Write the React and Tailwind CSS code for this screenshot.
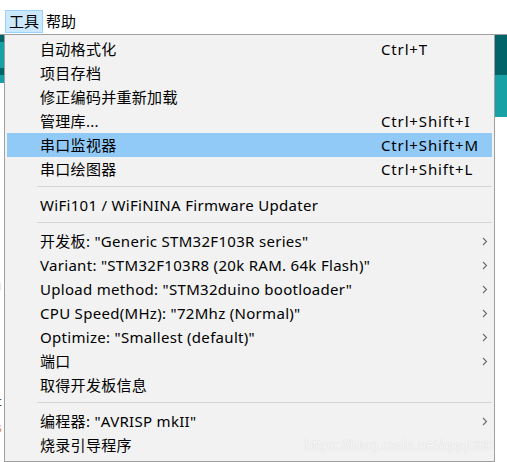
import React from "react";

const FONT = { fontFamily: '"Segoe UI", "Noto Sans", "Noto Sans CJK SC", sans-serif' };

const groups = [
  [
    { label: "自动格式化", key: "Ctrl+T" },
    { label: "项目存档" },
    { label: "修正编码并重新加载" },
    { label: "管理库...", key: "Ctrl+Shift+I" },
    { label: "串口监视器", key: "Ctrl+Shift+M", active: true },
    { label: "串口绘图器", key: "Ctrl+Shift+L" },
  ],
  [{ label: "WiFi101 / WiFiNINA Firmware Updater" }],
  [
    { label: '开发板: "Generic STM32F103R series"', sub: true },
    { label: 'Variant: "STM32F103R8 (20k RAM. 64k Flash)"', sub: true },
    { label: 'Upload method: "STM32duino bootloader"', sub: true },
    { label: 'CPU Speed(MHz): "72Mhz (Normal)"', sub: true },
    { label: 'Optimize: "Smallest (default)"', sub: true },
    { label: "端口", sub: true },
    { label: "取得开发板信息" },
  ],
  [
    { label: '编程器: "AVRISP mkII"', sub: true },
    { label: "烧录引导程序" },
  ],
];

const Chevron = () => (
  <svg width="6" height="9" viewBox="0 0 6 9" className="text-[#6b6b6b]">
    <path d="M1 1l3.5 3.5L1 8" fill="none" stroke="currentColor" strokeWidth="1.1" />
  </svg>
);

const MenuRow = ({ item }) => (
  <div
    className={`flex h-[24px] items-center pl-[33px] text-[15px] text-black ${
      item.active ? "bg-[#91c9f7]" : ""
    }`}
  >
    <span className="w-[341px] whitespace-nowrap tracking-[0.3px]">{item.label}</span>
    <span className="flex-1 whitespace-nowrap tracking-[0.85px]">{item.key}</span>
    {item.sub && (
      <span className="mr-[3px] flex w-[8px] justify-center">
        <Chevron />
      </span>
    )}
  </div>
);

const Separator = () => (
  <div className="h-[12px] pl-[30px] pt-[5px]">
    <div className="h-px bg-[#d5d5d5]" />
  </div>
);

export default function App() {
  return (
    <div className="relative h-[462px] w-[507px] overflow-hidden bg-white" style={FONT}>
      {/* menubar */}
      <div className="flex h-[35px] items-start border-b border-[#a0a0a0] pl-[5px] pt-[10px] text-[15px] text-black">
        <div className="flex h-[23px] items-center border border-[#99d1ff] bg-[#cce8ff] px-[3px]">工具</div>
        <div className="flex h-[23px] items-center px-[3px]">帮助</div>
      </div>

      <div className="flex h-[427px]">
        {/* editor peeking out on the left */}
        <div className="flex w-[4px] flex-col">
          <div className="h-[7px] bg-[#006468]" />
          <div className="h-[26px] bg-[#17a1a5]" />
          <div className="h-[7px] bg-[#006468]" />
          <div className="h-[8px] bg-[#17a1a5]" />
          <div className="relative flex-1 bg-white text-[12px] leading-none">
            <span className="absolute left-[-2px] top-[197px] text-[#d35400]">ı</span>
            <span className="absolute left-[-3px] top-[285px] text-[#00599c]">:</span>
            <span className="absolute left-[-4px] top-[313px] text-[#333]">c</span>
            <span className="absolute left-[-4px] top-[339px] text-[#e67e22]">s</span>
            <span className="absolute left-[-4px] top-[383px] text-[#333]">e</span>
            <span className="absolute left-[-2px] top-[405px] text-[#d04437]">ı</span>
          </div>
        </div>

        {/* dropdown menu */}
        <div className="w-[491px] border-x border-b border-[#a0a0a0] bg-[#f2f2f2] px-[2px] py-[2px]">
          {groups.map((g, gi) => (
            <React.Fragment key={gi}>
              {gi > 0 && <Separator />}
              {g.map((item) => (
                <MenuRow key={item.label} item={item} />
              ))}
            </React.Fragment>
          ))}
        </div>

        {/* editor on the right */}
        <div className="flex flex-1 flex-col">
          <div className="h-[40px] bg-[#006468]" />
          <div className="h-[42px] bg-[#17a1a5]" />
          <div className="flex-1 bg-white" />
        </div>
      </div>

      {/* watermark */}
      <div
        className="absolute right-[14px] top-[434px] text-[15px] text-white/85 [text-shadow:0_0_1px_rgba(0,0,0,0.2)]"
        style={{ fontFamily: '"Liberation Sans", Arial, sans-serif' }}
      >
        https://blog.csdn.net/qqq080
      </div>
    </div>
  );
}
